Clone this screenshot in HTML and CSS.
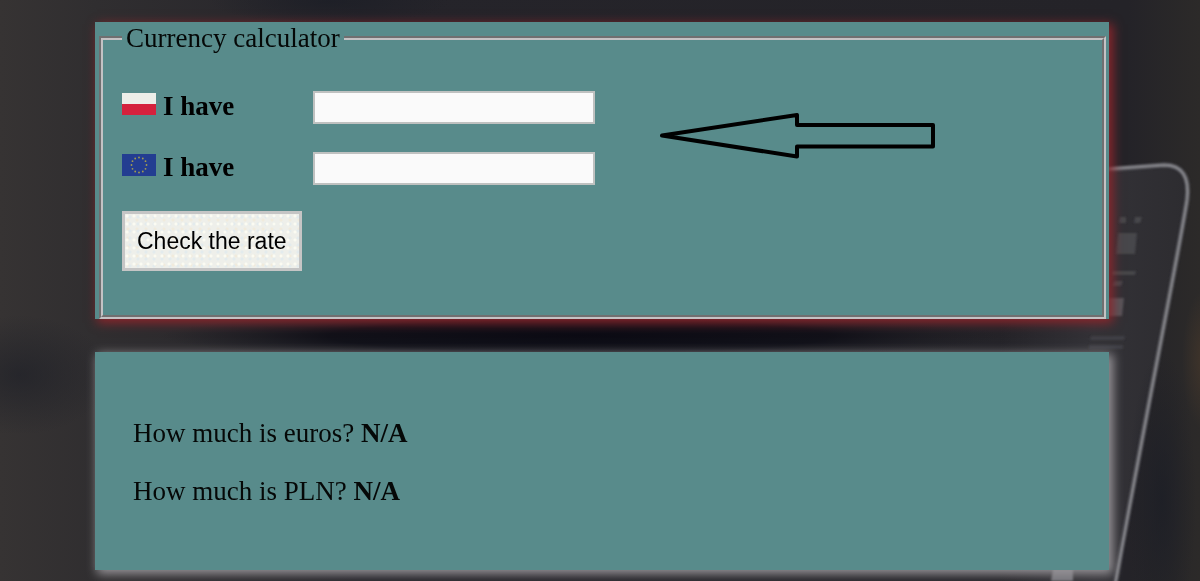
FILE: index.html
```html
<!DOCTYPE html>
<html lang="en">
<head>
<meta charset="utf-8">
<title>Currency calculator</title>
<link rel="stylesheet" href="styles.css">
</head>
<body>
<svg class="backdrop" viewBox="0 0 1200 581" preserveAspectRatio="none" aria-hidden="true">
  <defs>
    <linearGradient id="desk" x1="0" x2="1" y1="0" y2="0">
      <stop offset="0" stop-color="#363333"/>
      <stop offset="0.08" stop-color="#302e30"/>
      <stop offset="0.3" stop-color="#25242a"/>
      <stop offset="0.94" stop-color="#242328"/>
      <stop offset="1" stop-color="#2c2a29"/>
    </linearGradient>
    <linearGradient id="laptop" x1="0" x2="1" y1="0" y2="0">
      <stop offset="0" stop-color="#333237" stop-opacity="0"/>
      <stop offset="0.5" stop-color="#333237"/>
      <stop offset="1" stop-color="#2d2c30"/>
    </linearGradient>
    <radialGradient id="shade">
      <stop offset="0" stop-color="#0b0b14"/>
      <stop offset="0.6" stop-color="#0f0f17" stop-opacity="0.9"/>
      <stop offset="1" stop-color="#1a1a20" stop-opacity="0"/>
    </radialGradient>
    <radialGradient id="blue">
      <stop offset="0" stop-color="#1c1e26"/>
      <stop offset="1" stop-color="#1c1e26" stop-opacity="0"/>
    </radialGradient>
    <radialGradient id="amber">
      <stop offset="0" stop-color="#40342a"/>
      <stop offset="1" stop-color="#40342a" stop-opacity="0"/>
    </radialGradient>
    <filter id="soft" x="-50%" y="-50%" width="200%" height="200%"><feGaussianBlur stdDeviation="1"/></filter>
  </defs>
  <rect width="1200" height="581" fill="url(#desk)"/>
  <ellipse cx="20" cy="375" rx="90" ry="60" fill="url(#blue)" opacity="0.6"/>
  <ellipse cx="330" cy="2" rx="120" ry="22" fill="url(#blue)" opacity="0.8"/>
  <path d="M1000 170H1100L1168 165Q1191 165 1187 195L1113 581H1000Z" fill="url(#laptop)"/>
  <ellipse cx="1162" cy="500" rx="34" ry="150" fill="url(#blue)" opacity="0.8"/>
  <ellipse cx="1204" cy="360" rx="22" ry="70" fill="url(#amber)"/>
  <ellipse cx="580" cy="336" rx="420" ry="26" fill="url(#shade)"/>
  <g filter="url(#soft)">
    <path d="M1105 170L1164 165Q1192 165 1187 200C1180 246 1150 393 1115 585" fill="none" stroke="#4f4f55" stroke-width="5" opacity="0.7"/>
    <path d="M1105 169L1164 165Q1191 165 1187 200C1180 246 1150 393 1115 585" fill="none" stroke="#85858a" stroke-width="3"/>
    <g fill="#47474c">
      <path d="M1120 217h6v6h-7zM1135 217h7l-2 6h-6zM1118 233h19l-2 21h-19zM1112 271h24l-1 4h-23zM1114 281h9l-2 5h-9z"/>
      <path d="M1108 298h16l-2 18h-14z" fill="#56545a"/>
      <path d="M1091 336h34l-1 4h-34zM1089 345h34v4h-34z" opacity="0.7"/>
      <path d="M1053 569h20v12h-22z" fill="#77767b"/>
    </g>
  </g>
</svg>

<main class="page">
  <form class="panel panel-form">
    <fieldset class="calculator">
      <legend class="title">Currency calculator</legend>
      <div class="entry">
        <div class="fields">
          <label class="label" for="pln">
            <svg class="flag" viewBox="0 0 34 22" aria-hidden="true">
              <rect width="34" height="22" fill="#edeee9"/>
              <rect y="11" width="34" height="11" fill="#d5213d"/>
            </svg>
            I have
          </label>
          <input class="amount" id="pln" type="text">
          <label class="label" for="eur">
            <svg class="flag" viewBox="0 0 34 22" aria-hidden="true">
              <rect width="34" height="22" fill="#233d91"/>
              <g fill="#a39d50">
                <circle cx="17" cy="3.500" r="0.900"/><circle cx="20.800" cy="4.500" r="0.900"/>
                <circle cx="23.500" cy="7.200" r="0.900"/><circle cx="24.500" cy="11" r="0.900"/>
                <circle cx="23.500" cy="14.800" r="0.900"/><circle cx="20.800" cy="17.500" r="0.900"/>
                <circle cx="17" cy="18.500" r="0.900"/><circle cx="13.200" cy="17.500" r="0.900"/>
                <circle cx="10.500" cy="14.800" r="0.900"/><circle cx="9.500" cy="11" r="0.900"/>
                <circle cx="10.500" cy="7.200" r="0.900"/><circle cx="13.200" cy="4.500" r="0.900"/>
              </g>
            </svg>
            I have
          </label>
          <input class="amount" id="eur" type="text">
        </div>
        <svg class="arrow" viewBox="0 0 278 46" aria-hidden="true">
          <path d="M4 22.500L139 2V12H275V33.500H139V43.500Z" fill="none" stroke="#000" stroke-width="4" stroke-linejoin="round"/>
        </svg>
      </div>
      <button class="check" type="button">Check the rate</button>
    </fieldset>
  </form>

  <section class="panel panel-result">
    <p class="result">How much is euros? <strong>N/A</strong></p>
    <p class="result">How much is PLN? <strong>N/A</strong></p>
  </section>
</main>
</body>
</html>
```
FILE: styles.css
```css
* {
  box-sizing: border-box;
}

body {
  margin: 0;
  background: #28272b;
  color: #050807;
  font: 27px/30px "Liberation Serif", "Times New Roman", serif;
}

.backdrop {
  position: fixed;
  inset: 0;
  z-index: -1;
  width: 100%;
  height: 100%;
}

.page {
  display: flex;
  flex-direction: column;
  gap: 33px;
  padding: 22px 91px 11px 95px;
}

.panel {
  background: #588b8b;
}

.panel-form {
  padding: 1px 3px 0 4px;
  box-shadow: 3px 3px 10px 1px #8c262c;
}

.panel-result {
  display: flex;
  flex-direction: column;
  gap: 28px;
  padding: 66px 38px 64px;
  box-shadow: 3px 3px 10px 1px #99969a;
}

.calculator {
  min-width: 0;
  margin: 0;
  padding: 38px 19px 44px;
  border: 4px groove #c4c2c4;
}

.title {
  padding: 0 4px;
}

.entry {
  display: flex;
  align-items: center;
  gap: 63px;
  margin-bottom: 26px;
}

.fields {
  display: grid;
  grid-template-columns: 191px 282px;
  row-gap: 28px;
}

.label {
  display: flex;
  align-items: center;
  gap: 7px;
  height: 33px;
  padding-bottom: 4px;
  color: #000;
  font-weight: bold;
}

.flag {
  width: 34px;
  height: 22px;
  margin-bottom: 4px;
}

.amount {
  width: 100%;
  height: 33px;
  padding: 0 8px;
  border: 2px solid #bfc1c0;
  border-radius: 0;
  background: #fafafa;
  font: inherit;
}

.arrow {
  width: 278px;
  height: 46px;
  margin-bottom: 4px;
}

.check {
  display: block;
  height: 60px;
  padding: 0 12px;
  border: 3px solid #c5c5c5;
  background-color: #eeefea;
  background-image:
    radial-gradient(circle at 2px 2px, #fbfbf2 1px, transparent 2px),
    radial-gradient(circle at 5px 3px, #e3ebed 1px, transparent 2px),
    radial-gradient(circle at 3px 6px, #f1ebdc 1px, transparent 2px);
  background-size: 7px 8px, 8px 7px, 9px 9px;
  color: #000;
  font: 23px/28px "Liberation Sans", Arial, sans-serif;
}

.result {
  margin: 0;
}
```
